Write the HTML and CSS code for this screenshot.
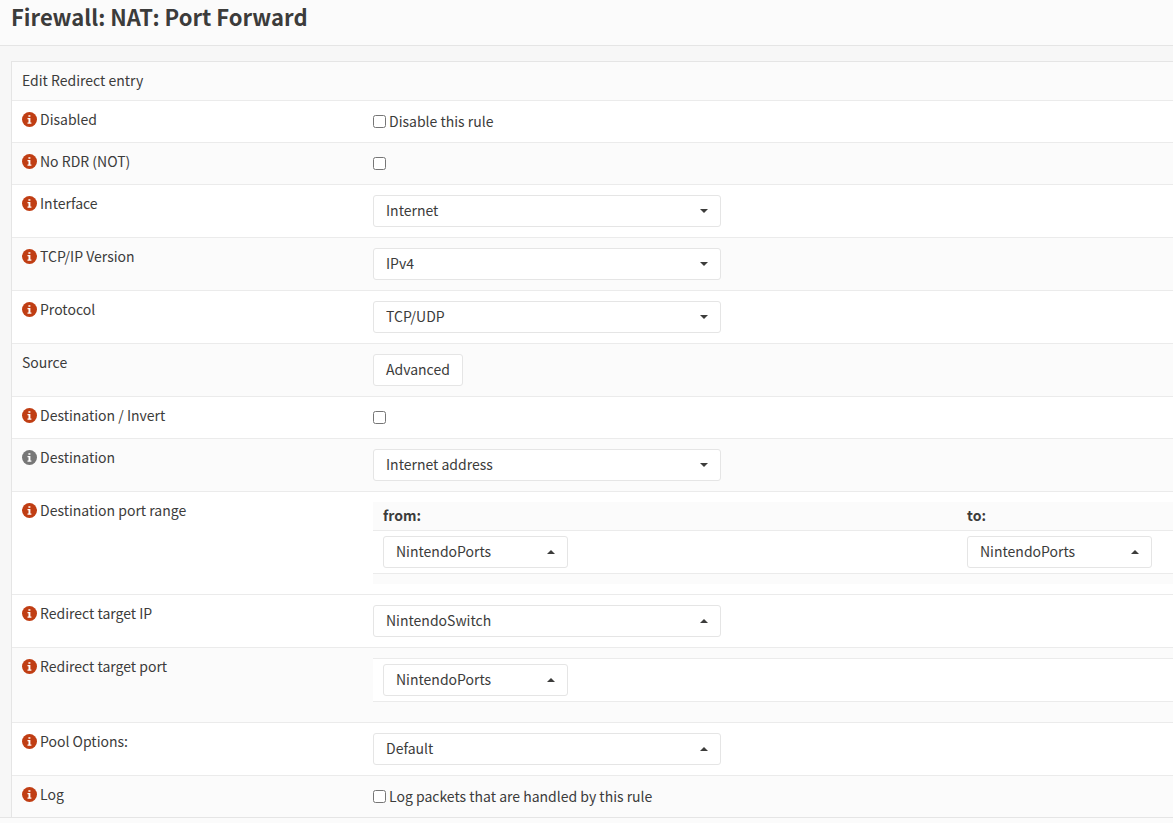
FILE: index.html
```html
<!DOCTYPE html>
<html lang="en">
<head>
<meta charset="utf-8">
<meta name="viewport" content="width=device-width, initial-scale=1">
<title>Firewall: NAT: Port Forward</title>
<link rel="stylesheet" href="styles.css">
</head>
<body>
<svg class="sprite" aria-hidden="true">
  <symbol id="info" viewBox="0 0 15 15">
    <circle cx="7.5" cy="7.5" r="7.5" fill="currentColor"/>
    <path fill="#fff" d="M6.4 3.2h2v1.6h-2zM5.5 6h2.9v4.4h1v1.3H5.5v-1.3h1V7.3h-1z"/>
  </symbol>
</svg>
<header class="page-head"><h1>Firewall: NAT: Port Forward</h1></header>
<main class="content">
  <form>
  <table class="form-table">
    <thead>
      <tr><th colspan="2" scope="colgroup">Edit Redirect entry</th></tr>
    </thead>
    <tbody>
      <tr>
        <td class="name"><span class="field"><svg class="icon"><use href="#info"/></svg>Disabled</span></td>
        <td><label class="check"><input type="checkbox">Disable this rule</label></td>
      </tr>
      <tr class="shade">
        <td class="name"><label class="field" for="nordr"><svg class="icon"><use href="#info"/></svg>No RDR (NOT)</label></td>
        <td><span class="check"><input type="checkbox" id="nordr"></span></td>
      </tr>
      <tr>
        <td class="name"><label class="field" for="interface"><svg class="icon"><use href="#info"/></svg>Interface</label></td>
        <td><div class="select"><select id="interface"><option>Internet</option></select></div></td>
      </tr>
      <tr class="shade">
        <td class="name"><label class="field" for="ipversion"><svg class="icon"><use href="#info"/></svg>TCP/IP Version</label></td>
        <td><div class="select"><select id="ipversion"><option>IPv4</option></select></div></td>
      </tr>
      <tr>
        <td class="name"><label class="field" for="protocol"><svg class="icon"><use href="#info"/></svg>Protocol</label></td>
        <td><div class="select"><select id="protocol"><option>TCP/UDP</option></select></div></td>
      </tr>
      <tr class="shade">
        <td class="name"><span class="field">Source</span></td>
        <td><button class="button" type="button">Advanced</button></td>
      </tr>
      <tr>
        <td class="name"><label class="field" for="invert"><svg class="icon"><use href="#info"/></svg>Destination / Invert</label></td>
        <td><span class="check"><input type="checkbox" id="invert"></span></td>
      </tr>
      <tr class="shade">
        <td class="name"><label class="field" for="destination"><svg class="icon muted"><use href="#info"/></svg>Destination</label></td>
        <td><div class="select"><select id="destination"><option>Internet address</option></select></div></td>
      </tr>
      <tr>
        <td class="name"><span class="field"><svg class="icon"><use href="#info"/></svg>Destination port range</span></td>
        <td class="wide">
          <table class="ports filled">
            <thead><tr><th scope="col" class="first"><label for="from">from:</label></th><th scope="col"><label for="to">to:</label></th></tr></thead>
            <tbody><tr>
              <td><div class="select small up"><select id="from"><option>NintendoPorts</option></select></div></td>
              <td><div class="select small up"><select id="to"><option>NintendoPorts</option></select></div></td>
            </tr></tbody>
            <tfoot><tr><td colspan="2"></td></tr></tfoot>
          </table>
        </td>
      </tr>
      <tr>
        <td class="name"><label class="field" for="target"><svg class="icon"><use href="#info"/></svg>Redirect target IP</label></td>
        <td><div class="select up"><select id="target"><option>NintendoSwitch</option></select></div></td>
      </tr>
      <tr class="shade">
        <td class="name"><label class="field" for="targetport"><svg class="icon"><use href="#info"/></svg>Redirect target port</label></td>
        <td class="wide">
          <table class="ports">
            <tbody><tr>
              <td><div class="select small up"><select id="targetport"><option>NintendoPorts</option></select></div></td>
            </tr></tbody>
            <tfoot><tr><td></td></tr></tfoot>
          </table>
        </td>
      </tr>
      <tr>
        <td class="name"><label class="field" for="pool"><svg class="icon"><use href="#info"/></svg>Pool Options:</label></td>
        <td><div class="select up"><select id="pool"><option>Default</option></select></div></td>
      </tr>
      <tr class="shade">
        <td class="name"><span class="field"><svg class="icon"><use href="#info"/></svg>Log</span></td>
        <td><label class="check"><input type="checkbox">Log packets that are handled by this rule</label></td>
      </tr>
    </tbody>
  </table>
  </form>
</main>
<footer class="page-foot"></footer>
</body>
</html>
```
FILE: styles.css
```css
* {
  box-sizing: border-box;
}

body {
  margin: 0;
  min-height: 100vh;
  display: flex;
  flex-direction: column;
  background: #f7f7f7;
  color: #3c3c3b;
  font: 14px/21px "Noto Sans CJK JP", "Open Sans", sans-serif;
}

.sprite {
  display: none;
}

.page-head {
  padding: 2px 11px 15px;
  background: #fbfbfb;
  border-bottom: 1px solid #e5e5e5;
}

h1 {
  margin: 0;
  font-size: 22px;
  line-height: 28px;
  font-weight: 700;
}

.content {
  padding: 15px 0 0 11px;
}

table {
  width: 100%;
  border-collapse: separate;
  border-spacing: 0;
}

th {
  text-align: left;
}

.form-table {
  border: solid #e5e5e5;
  border-width: 1px 0 0 1px;
}

.form-table > thead th {
  padding: 8px 10px 9px;
  font-weight: 400;
  background: #fbfbfb;
}

.form-table > tbody > tr > td {
  padding: 10px;
  vertical-align: top;
  border-top: 1px solid #ebebeb;
  background: #fff;
}

.form-table > tbody > .shade > td {
  background: #fbfbfb;
}

.form-table > tbody > tr > .name {
  width: 351px;
  padding-top: 8px;
}

.form-table > tbody > tr > .wide {
  padding-right: 0;
}

.field {
  display: flex;
  align-items: center;
  gap: 3px;
}

.icon {
  width: 15px;
  height: 15px;
  color: #c03e14;
}

.icon.muted {
  color: #777;
}

.check {
  display: flex;
  align-items: center;
  gap: 3px;
  min-height: 21px;
}

input[type="checkbox"] {
  width: 13px;
  height: 13px;
  margin: 0;
}

.select {
  position: relative;
  max-width: 348px;
}

.select.small {
  max-width: 185px;
}

select,
.button {
  display: block;
  height: 32px;
  padding: 0 12px 2px;
  border: 1px solid #e5e5e5;
  border-radius: 3px;
  background: #fff;
  color: inherit;
  font: inherit;
}

select {
  width: 100%;
  appearance: none;
}

.select::after {
  content: "";
  position: absolute;
  top: 14px;
  right: 13px;
  border: solid transparent;
  border-width: 4px 4px 0;
  border-top-color: #3c3c3b;
  pointer-events: none;
}

.select.up::after {
  border-width: 0 4px 4px;
  border-bottom-color: #3c3c3b;
}

.ports th {
  padding: 3px 10px 4px;
  background: #fbfbfb;
}

.ports .first {
  width: 73%;
}

.ports tbody td {
  padding: 5px 10px;
  border: solid #ebebeb;
  border-width: 1px 0;
  background: #fff;
}

.ports tfoot td {
  height: 10px;
  padding: 0;
}

.filled tfoot td {
  background: #fbfbfb;
}

.page-foot {
  flex: 1;
  border-top: 1px solid #e5e5e5;
  background: #fbfbfb;
}
```
